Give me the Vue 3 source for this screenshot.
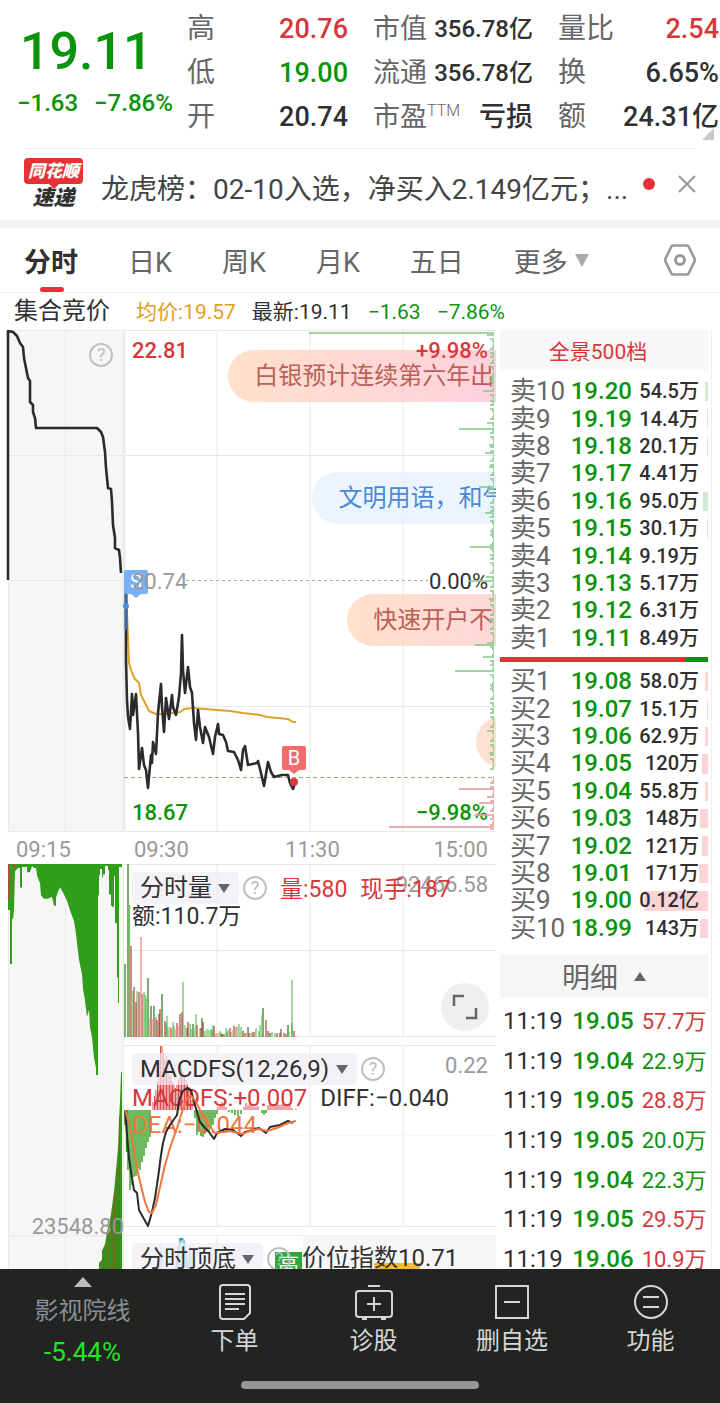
<template>
  <div class="app">
    <header class="quote">
      <div class="price-box">
        <div class="price">19.11</div>
        <div class="change"><span>−1.63</span><span>−7.86%</span></div>
      </div>
      <dl v-for="(grupo, i) in stats" :key="i" class="stats">
        <div v-for="item in grupo" :key="item.label" class="stat">
          <dt>{{ item.label }}<sup v-if="item.sup">{{ item.sup }}</sup></dt>
          <dd :class="[item.color, { small: item.small }]">{{ item.value }}</dd>
        </div>
      </dl>
      <span class="corner"></span>
    </header>

    <section class="news">
      <div class="news-logo">
        <span class="logo-top">同花顺</span>
        <span class="logo-bottom">速递</span>
      </div>
      <a href="#" class="news-text">龙虎榜：02-10入选，净买入2.149亿元；...</a>
      <span class="news-dot"></span>
      <button type="button" class="news-close" aria-label="关闭">
        <svg width="18" height="18" viewBox="0 0 18 18"><path d="M1 1L17 17M17 1L1 17" stroke="#999" stroke-width="2" /></svg>
      </button>
    </section>

    <nav class="tabs">
      <button
        v-for="tab in tabs"
        :key="tab"
        type="button"
        class="tab"
        :class="{ active: tab === activeTab }"
        @click="activeTab = tab"
      >{{ tab }}<i v-if="tab === '更多'" class="caret"></i></button>
      <button type="button" class="settings" aria-label="设置">
        <svg width="32" height="34" viewBox="0 0 32 34" fill="none" stroke="#999">
          <path d="M9 2.5H23Q24 2.5 24.600 3.500L30.500 15.500Q31 17 30.500 18.500L24.600 30.500Q24 31.500 23 31.500H9Q8 31.500 7.400 30.500L1.500 18.500Q1 17 1.500 15.500L7.400 3.500Q8 2.500 9 2.500Z" stroke-width="2.600" />
          <circle cx="16" cy="17" r="4.500" stroke-width="3" />
        </svg>
      </button>
    </nav>

    <div class="summary">
      <span class="summary-title">集合竞价</span>
      <span class="orange">均价:19.57</span>
      <span>最新:19.11</span>
      <span class="green">−1.63</span>
      <span class="green">−7.86%</span>
    </div>

    <main class="content">
      <section class="charts">
        <div class="chart">
          <svg class="plot" viewBox="0 0 496 502" preserveAspectRatio="none">
            <rect x="8" y="0" width="116" height="502" fill="#f6f6f6" />
            <path d="M8 .5H496M8 125.500H496M8 250.500H124M124 376.500H496M8 501.500H496M8.500 0V502M65.500 0V502M217 0V502M310 0V502M403 0V502" class="grid" />
            <path d="M124 0V502" stroke="#ebebeb" stroke-width="3" />
            <path d="M186 250.500H428" stroke="#aaa" stroke-dasharray="3 3" />
            <path d="M124 447.500H495" stroke="#a89c70" stroke-dasharray="4 3" />
            <polyline points="8,250 8,1 13,2 17,6 20,13 23,17 24,28 26,38 28,48 30,51 30,72 33,75 33,82 35,88 36,98 97,98 101,102 103,107 105,122 106,138 108,158 111,159 112,172 113,195 115,208 115,218 119,220 120,228 121,243" class="line thick" />
            <polyline points="126,260 128,307 129,333 132,343 135,349 139,353 141,365 145,373 149,381 156,384 165,384 173,383 180,382 184,379 193,378 217,380 230,381 243,383 260,385 267,387 288,389 293,392 296,392" class="line avg" />
            <polyline points="126,251 126,330 127,370 128,387 130,399 132,364 133,385 136,364 138,403 139,439 142,418 144,435 146,440 148,458 151,425 152,433 153,412 156,424 158,383 161,354 162,377 164,402 166,368 169,389 172,365 173,377 176,385 179,367 181,343 182,305 183,340 185,363 188,337 190,357 192,363 194,393 196,410 198,380 200,397 203,413 205,397 209,407 213,424 215,407 218,394 219,404 223,405 226,412 228,421 234,422 238,430 241,440 243,420 245,416 248,435 257,433 258,431 261,443 264,456 267,438 268,432 271,442 274,447 282,445 288,445 290,453 293,459 295,453" class="line thick" />
            <path d="M126 251V300" stroke="#3a6aa5" stroke-width="3" />
            <circle cx="126" cy="276" r="3" fill="#4a90e2" />
            <rect x="124" y="240" width="24" height="24" rx="2" fill="#7ab0f5" />
            <path d="M131 264H141L136 268Z" fill="#7ab0f5" />
            <text x="136" y="259" class="marker">S</text>
            <circle cx="294" cy="452" r="4" fill="#d9363a" />
            <rect x="282" y="416" width="24" height="24" rx="2" fill="#f26b6d" />
            <path d="M289 440H299L294 444Z" fill="#f26b6d" />
            <text x="294" y="435" class="marker">B</text>
          </svg>
          <div class="pills">
            <span class="pill pill-1">白银预计连续第六年出</span>
            <span class="pill pill-2">文明用语，和气</span>
            <span class="pill pill-3">快速开户不</span>
            <span class="pill pill-4"></span>
          </div>
          <div class="labels">
            <span class="red">22.81</span><span class="red right">+9.98%</span>
            <span class="gray">20.74</span><span class="right">0.00%</span>
            <span class="green">18.67</span><span class="green right">−9.98%</span>
          </div>
          <svg class="plot" viewBox="0 0 496 502" preserveAspectRatio="none">
            <path :d="profileSell" stroke="#8ac98e" stroke-width="2" stroke-opacity=".8" />
            <path :d="profileBuy" stroke="#e59a9d" stroke-width="2" stroke-opacity=".8" />
          </svg>
          <button type="button" class="help help-auction" aria-label="集合竞价说明">?</button>
        </div>

        <div class="time-axis">
          <span>09:15</span><span>09:30</span><span>11:30</span><span>15:00</span>
        </div>

        <div class="lower">
          <div class="auction-volume">
            <svg class="plot" viewBox="0 0 124 406" preserveAspectRatio="none">
              <rect x="8" width="116" height="406" fill="#f6f6f6" />
              <path d="M8.500 0V406M65.500 0V406M8 364.500H124" class="grid" />
              <path d="M8 0H122V3H119V136H118V111H117V58H115V12H114V42H112V41H111V30H109V6H108V2H105V10H103V13H102V5H100V11H99V31H98V207H96V200L94 190L92 170L90 160L89 143L87 150L85 134L83 122L82 108L79 94L77 78L76 68L74 56L71 48L67 36L63 28L60 23L58 27L56 33V41H54L52 32L48 34H44L41 31L40 19L37 11L36 4H34L32 2L30 8H27V3H22V23H20V4H18L15 7L14 45L13 54H12V98H10V45H8Z" fill="#309e1a" />
              <path d="M8 0H10V34H8ZM14 0H15V3H14Z" fill="#b34b36" />
              <path d="M98 406L99 405V391L102 388V379L105 373L107 361L110 349L112 336L114 321L116 301L118 278L119 251L120 234L121 204H122V406Z" fill="#39941b" />
              <path d="M103 406V385M106 406V372M109 406V358M112 406V345M114.500 406V322M117 406V298M119.500 406V248" stroke="#7a5a20" stroke-opacity=".7" />
              <path d="M123.500 0V406" stroke="#dcf5d6" />
            </svg>
            <span class="axis-value">23548.80</span>
          </div>

          <div class="indicators">
            <div class="panel panel-volume">
              <svg class="plot" viewBox="0 0 372 173" preserveAspectRatio="none">
                <path d="M0 .5H372M0 86.500H372M0 172.500H372M93 0V173M186 0V173M279 0V173" class="grid" />
                <path v-for="serie in volume" :key="serie.color" :d="serie.d" :stroke="serie.color" stroke-width="1.300" />
              </svg>
              <div class="panel-head">
                <label class="picker"><select aria-label="指标一"><option>分时量</option></select><i class="caret"></i></label>
                <button type="button" class="help" aria-label="分时量说明">?</button>
                <span class="red volume-text">量:580</span>
                <span class="red">现手:187</span>
              </div>
              <div class="panel-line">额:110.7万</div>
              <span class="scale">92466.58</span>
              <button type="button" class="expand" aria-label="全屏">
                <svg width="26" height="26" viewBox="0 0 26 26" fill="none" stroke="#666" stroke-width="2.500"><path d="M2 12V2H12M24 14V24H14" /></svg>
              </button>
            </div>

            <div class="panel panel-macd">
              <svg class="plot" viewBox="0 0 372 182" preserveAspectRatio="none">
                <path d="M0 .5H372M0 181.500H372M93 0V182M186 0V182M279 0V182" class="grid" />
                <path d="M0 90.500H372" stroke="#f6f6f6" />
                <path :d="macdUp" stroke="#d9363a" stroke-opacity=".9" />
                <path :d="macdDown" stroke="#309e1a" stroke-width="1.400" />
              </svg>
              <div class="panel-head">
                <label class="picker"><select aria-label="指标二"><option>MACDFS(12,26,9)</option></select><i class="caret"></i></label>
                <button type="button" class="help" aria-label="MACDFS说明">?</button>
              </div>
              <div class="panel-line"><span class="red">MACDFS:+0.007</span><span>DIFF:−0.040</span></div>
              <div class="panel-line dea">DEA:−0.044</div>
              <svg class="plot curves" viewBox="0 0 372 182" preserveAspectRatio="none">
                <polyline points="1,65 3,90 5,113 8,133 10,145 13,148 15,165 20,174 24,181 28,167 31,153 34,133 37,110 39,98 42,87 46,80 53,70 55,57 58,47 63,43 67,45 70,57 76,77 81,83 85,87 90,94 93,88 101,84 109,85 117,91 121,87 129,85 135,83 142,88 146,82 156,80 164,76 169,78" class="line" />
                <polyline points="1,65 6,80 11,113 16,137 21,157 25,167 28,168 32,160 36,142 41,120 46,103 53,83 58,67 63,53 67,51 71,55 76,65 83,78 91,88 99,87 106,86 118,89 129,85 135,84 143,86 153,83 164,78 172,76" class="line dea-line" />
              </svg>
              <span class="scale">0.22</span>
            </div>

            <div class="panel panel-top">
              <svg class="plot" viewBox="0 0 372 60" preserveAspectRatio="none">
                <path d="M0 .5H372M93 0V60" class="grid" />
                <rect x="179" y="1" width="193" height="59" fill="#f6f6f6" />
                <path d="M34 60L37 8L40 60ZM62 60L66 10L70 60Z" fill="#b5ddf0" />
                <path d="M51 60L56 8Q58 2 60 8L65 60Z" fill="#c8e8d8" stroke="#85c4e0" stroke-width="2" />
                <circle cx="57" cy="6" r="2" fill="#2a9fc0" />
              </svg>
              <div class="panel-head">
                <label class="picker"><select aria-label="指标三"><option>分时顶底</option></select><i class="caret"></i></label>
                <button type="button" class="help" aria-label="分时顶底说明">?</button>
                <span class="tag">高</span>
                <span class="index-text">价位指数10.71</span>
              </div>
            </div>
          </div>
        </div>
      </section>

      <aside class="book">
        <button type="button" class="depth-button">全景500档</button>
        <table class="orders sell">
          <tbody>
            <tr v-for="row in sells" :key="row[0]">
              <th scope="row">{{ row[0] }}</th>
              <td class="green">{{ row[1] }}</td>
              <td class="amount"><i :style="{ width: row[3] + '%' }"></i><span>{{ row[2] }}</span></td>
            </tr>
          </tbody>
        </table>
        <div class="ratio"><i></i></div>
        <table class="orders buy">
          <tbody>
            <tr v-for="row in buys" :key="row[0]">
              <th scope="row">{{ row[0] }}</th>
              <td class="green">{{ row[1] }}</td>
              <td class="amount"><i :style="{ width: row[3] + '%' }"></i><span>{{ row[2] }}</span></td>
            </tr>
          </tbody>
        </table>
        <button type="button" class="detail-button">明细<i class="caret up"></i></button>
        <table class="deals">
          <tbody>
            <tr v-for="(deal, i) in deals" :key="i">
              <td>11:19</td>
              <td class="green">{{ deal[0] }}</td>
              <td class="deal-amount" :class="deal[2]">{{ deal[1] }}</td>
            </tr>
          </tbody>
        </table>
      </aside>
    </main>

    <footer class="bottom">
      <div class="actions">
        <a href="#" class="sector">
          <i class="caret up"></i>
          <span>影视院线</span>
          <b>-5.44%</b>
        </a>
        <button v-for="action in actions" :key="action.name" type="button" class="action">
          <svg width="40" height="38" viewBox="0 0 40 38" fill="none" stroke="#d6d6d6" stroke-width="2">
            <path :d="action.icon" />
          </svg>
          <span>{{ action.name }}</span>
        </button>
      </div>
      <div class="home-bar"></div>
    </footer>
  </div>
</template>

<script setup>
import { ref } from 'vue';

const stats = [
  [
    { label: '高', value: '20.76', color: 'red' },
    { label: '低', value: '19.00', color: 'green' },
    { label: '开', value: '20.74' }
  ],
  [
    { label: '市值', value: '356.78亿', small: true },
    { label: '流通', value: '356.78亿', small: true },
    { label: '市盈', sup: 'TTM', value: '亏损' }
  ],
  [
    { label: '量比', value: '2.54', color: 'red' },
    { label: '换', value: '6.65%' },
    { label: '额', value: '24.31亿' }
  ]
];

const tabs = ['分时', '日K', '周K', '月K', '五日', '更多'];
const activeTab = ref('分时');

// nome, preço, volume, largura da barra (%)
const sells = [
  ['卖10', '19.20', '54.5万', 4],
  ['卖9', '19.19', '14.4万', 1],
  ['卖8', '19.18', '20.1万', 1],
  ['卖7', '19.17', '4.41万', 0],
  ['卖6', '19.16', '95.0万', 7],
  ['卖5', '19.15', '30.1万', 2],
  ['卖4', '19.14', '9.19万', 0],
  ['卖3', '19.13', '5.17万', 0],
  ['卖2', '19.12', '6.31万', 0],
  ['卖1', '19.11', '8.49万', 0]
];

const buys = [
  ['买1', '19.08', '58.0万', 4],
  ['买2', '19.07', '15.1万', 1],
  ['买3', '19.06', '62.9万', 4],
  ['买4', '19.05', '120万', 8],
  ['买5', '19.04', '55.8万', 4],
  ['买6', '19.03', '148万', 11],
  ['买7', '19.02', '121万', 8],
  ['买8', '19.01', '171万', 12],
  ['买9', '19.00', '0.12亿', 86],
  ['买10', '18.99', '143万', 11]
];

const deals = [
  ['19.05', '57.7万', 'red'],
  ['19.04', '22.9万', 'green'],
  ['19.05', '28.8万', 'red'],
  ['19.05', '20.0万', 'green'],
  ['19.04', '22.3万', 'green'],
  ['19.05', '29.5万', 'red'],
  ['19.06', '10.9万', 'red']
];

const actions = [
  { name: '下单', icon: 'M8 2H32Q35 2 35 5V30L29 36H8Q5 36 5 33V5Q5 2 8 2ZM10 11H30M10 16H30M10 21H30M10 26H24' },
  { name: '诊股', icon: 'M5 8H35Q38 8 38 11V31Q38 34 35 34H5Q2 34 2 31V11Q2 8 5 8ZM14 3H26M20 14V28M13 21H27M8 36H13M27 36H32' },
  { name: '删自选', icon: 'M4 3H36V35H4ZM12 19H28' },
  { name: '功能', icon: 'M20 3A16 16 0 0 1 20 35A16 16 0 0 1 20 3ZM12 14H28M12 24H28' }
];

const bars = (list, base) => list.map(([x, h]) => `M${x} ${base}V${base - h}`).join('');

const volume = [
  {
    color: '#3d7d2b',
    d: bars([[1, 73], [4, 173], [24, 59], [27, 31], [30, 31], [38, 43], [69, 13], [78, 19], [88, 7], [97, 4], [103, 5], [124, 10], [139, 29], [164, 12], [168, 14], [146, 4], [156, 4]], 173)
  },
  {
    color: '#6fc565',
    d: bars([[5.5, 132], [9, 46], [13, 46], [20, 45], [21.5, 42], [23, 39], [32, 20], [43, 21], [42, 14], [44, 10], [49, 15], [50, 11], [59, 55], [61, 12], [66, 13], [67, 8], [70, 10], [72, 23], [76, 9], [79, 13], [81, 6], [83, 8], [85, 7], [87, 8], [89, 12], [96, 6], [99, 3], [102, 9], [104, 7], [107, 5], [112, 10], [115, 13], [117, 10], [127, 4], [130, 5], [132, 9], [135, 6], [136, 12], [138, 22], [148, 5], [151, 4], [165, 5], [168, 57]], 173)
  },
  {
    color: '#b5504a',
    d: bars([[7, 91], [10, 50], [12, 35], [15, 45], [18, 43], [33, 17], [35, 23], [36, 28], [41, 16], [47, 9], [53, 14], [56, 23], [58, 25], [63, 9], [64, 15], [73, 12], [77, 9], [79, 15], [90, 11], [98, 3], [100, 3], [106, 9], [110, 11], [119, 6], [121, 4], [125, 4], [129, 5], [142, 17], [144, 6], [153, 4], [157, 8], [160, 4], [162, 3], [170, 6]], 173)
  },
  {
    color: '#f08a8c',
    d: bars([[17, 100], [26, 19], [29, 18], [31.5, 18], [46, 10], [52, 8], [54, 11], [92, 4], [94, 4], [109, 7], [113, 10], [123, 4], [131, 5], [172, 1]], 173)
  }
];

const macdUp = bars([
  [29, 8], [30.5, 14], [32, 20], [33.5, 28], [35, 36], [36.5, 64], [38, 64], [39.5, 57], [41, 50], [42.5, 54], [44, 42],
  [45.5, 34], [47, 36], [48.5, 28], [50, 26], [51.5, 22], [53, 25], [54.5, 30], [56, 40], [57.5, 42], [59, 38], [60.5, 34],
  [62, 30], [63.5, 26], [65, 23], [66.5, 19], [68, 10], [94, 3], [96, 5], [98, 8], [100, 6], [102, 3], [120, 3], [122, 7],
  [124, 5], [126, 6], [128, 4], [130, 3], [132, 3], [134, 4], [144, 5], [146, 6], [148, 5], [150, 6], [152, 5], [154, 6],
  [156, 5], [158, 6], [160, 7], [162, 6], [164, 6], [166, 5], [168, 2], [172, 1]
], 65);

const macdDown = bars([
  [1, -15], [2.5, -42], [4, -60], [6, -80], [8, -75], [10, -67], [12, -66], [14, -58], [16, -60], [18, -52], [20, -46],
  [22, -38], [24, -32], [26, -27], [71, -8], [73, -25], [75, -22], [77, -26], [79, -27], [81, -24], [83, -20], [85, -21],
  [87, -18], [89, -15], [91, -8], [93, -4], [105, -2], [108, -3], [111, -5], [114, -6], [117, -4], [138, -3], [140, -5], [142, -3]
], 65);

// distribuição por preço na borda direita do gráfico
const sellPeaks = { 3: 185, 61: 11, 99: 35, 123: 9, 157: 15, 183: 9, 217: 24, 247: 8, 251: 26, 315: 19, 327: 11, 341: 39 };
const buyPeaks = { 459: 35, 473: 15, 485: 20, 497: 105 };

const profile = (from, to, peaks) => {
  let d = '';
  for (let y = from; y <= to; y += 2) {
    const w = peaks[y] || ((y * y) % 7) % 5 + (y % 22 === 5 ? 3 : 0);
    d += `M494 ${y}H${494 - w}`;
  }
  return d;
};

const profileSell = profile(3, 441, sellPeaks);
const profileBuy = profile(447, 499, buyPeaks);
</script>

<style>
body {
  margin: 0;
  background: #fff;
}
</style>

<style scoped>
.app {
  display: flex;
  flex-direction: column;
  height: 100vh;
  overflow: hidden;
  color: #303030;
  font-family: Roboto, "Noto Sans CJK SC", sans-serif;
}
* {
  box-sizing: border-box;
}
button, select {
  padding: 0;
  border: none;
  background: none;
  color: inherit;
  font-family: inherit;
  cursor: pointer;
}
a {
  color: inherit;
  text-decoration: none;
}
.red {
  color: #d6383a;
}
.green {
  color: #0b930b;
}
.orange {
  color: #e0a020;
}
.gray {
  color: #999;
}
.right {
  text-align: right;
}
.caret {
  display: inline-block;
  border: 7px solid transparent;
  border-top: 10px solid #666;
  border-bottom: none;
}
.caret.up {
  border-top: none;
  border-bottom: 10px solid #666;
}

/* Cotação */
.quote {
  position: relative;
  display: grid;
  grid-template-columns: 187fr 186fr 185fr 162fr;
  padding: 7px 0 9px;
  flex: none;
}
.price-box {
  padding: 11px 0 0 17px;
  color: #0b930b;
  font-weight: 500;
}
.price {
  padding-left: 3px;
  font-size: 52px;
  line-height: 68px;
}
.change {
  display: flex;
  gap: 16px;
  font-size: 24px;
  line-height: 34px;
}
.stats {
  margin: 0;
  padding-right: 25px;
}
.stats:nth-of-type(3) {
  padding-right: 1px;
}
.stat {
  display: flex;
  justify-content: space-between;
  align-items: center;
  height: 44px;
  white-space: nowrap;
  font-size: 27px;
  line-height: 44px;
}
.stat dt {
  color: #666;
}
.stat dd {
  margin: 0;
  font-weight: 500;
}
.stat dd.small {
  font-size: 24px;
}
.stats:nth-of-type(3) dt, .stats:nth-of-type(1) dt {
  font-size: 28px;
}
.stat sup {
  font-size: 16px;
  font-weight: 300;
  line-height: 16px;
}
.corner {
  position: absolute;
  right: 6px;
  bottom: 8px;
  border: 6px solid transparent;
  border-right-color: #c8c8c8;
  border-bottom-color: #c8c8c8;
}

/* Notícia */
.news {
  display: flex;
  align-items: center;
  flex: none;
  height: 80px;
  padding: 0 24px;
  border-bottom: 8px solid #f5f5f5;
  background: linear-gradient(#f0f0f0, #f0f0f0) center top / calc(100% - 48px) 1px no-repeat;
}
.news-logo {
  display: flex;
  flex-direction: column;
  gap: 2px;
  width: 59px;
  margin-right: 18px;
  font-style: italic;
  font-weight: 900;
  text-align: center;
}
.logo-top {
  position: relative;
  padding: 0 2px;
  border-radius: 4px;
  background: #e63234;
  color: #fff;
  font-size: 17px;
  line-height: 26px;
}
.logo-top::after {
  content: "";
  position: absolute;
  left: 50%;
  top: 100%;
  margin-left: -5px;
  border: 5px solid transparent;
  border-top-color: #e63234;
}
.logo-bottom {
  font-size: 21px;
  line-height: 24px;
}
.news-text {
  flex: 1;
  overflow: hidden;
  white-space: nowrap;
  font-size: 28px;
  line-height: 40px;
  padding-top: 8px;
  color: #444;
}
.news-dot {
  width: 12px;
  height: 12px;
  margin: 0 23px 0 10px;
  border-radius: 50%;
  background: #e63234;
}
.news-close {
  height: 18px;
}
.news-close svg {
  display: block;
}
.news-text {
  padding-top: 12px;
}

/* Abas */
.tabs {
  display: flex;
  align-items: center;
  flex: none;
  gap: 50px;
  height: 65px;
  padding: 0 24px;
  border-bottom: 1px solid #eee;
}
.tab {
  position: relative;
  display: flex;
  align-items: center;
  height: 64px;
  white-space: nowrap;
  font-size: 27px;
  color: #666;
}
.tab .caret {
  margin-left: 7px;
  border-top: 13px solid #aaa;
}
.tab.active {
  color: #303030;
  font-weight: 700;
}
.tab.active::after {
  content: "";
  position: absolute;
  left: 16px;
  right: 14px;
  bottom: 0;
  height: 5px;
  border-radius: 3px;
  background: #e63234;
}
.settings {
  margin-left: auto;
  height: 34px;
}
.settings svg {
  display: block;
}

.summary {
  display: flex;
  align-items: baseline;
  flex: none;
  gap: 16px;
  height: 37px;
  padding: 0 14px;
  font-size: 21px;
  line-height: 37px;
  white-space: nowrap;
}
.summary-title {
  margin-right: 10px;
  font-size: 24px;
}

/* Gráficos */
.content {
  display: grid;
  grid-template-columns: 31fr 14fr;
  flex: 1;
  min-height: 0;
  overflow: hidden;
}
.charts {
  min-width: 0;
}
.chart {
  position: relative;
  height: 502px;
  overflow: hidden;
}
.plot {
  position: absolute;
  inset: 0;
  width: 100%;
  height: 100%;
  fill: none;
}
.grid {
  stroke: #e8e8e8;
}
.line {
  fill: none;
  stroke: #2b2b2b;
  stroke-width: 2;
  stroke-linejoin: round;
}
.thick {
  stroke-width: 2.6;
}
.avg {
  stroke: #dba32c;
}
.dea-line {
  stroke: #ee7740;
}
.marker {
  fill: #fff;
  font-size: 20px;
  text-anchor: middle;
}
.labels {
  position: absolute;
  inset: 8px 8px 6px 132px;
  display: grid;
  grid-template-columns: 1fr 1fr;
  align-content: space-between;
  font-size: 22px;
  line-height: 26px;
}
.labels .red, .labels .green {
  font-weight: 500;
}
.pills {
  position: absolute;
  inset: 20px 0 auto 0;
  display: flex;
  flex-direction: column;
  gap: 70px;
}
.pill {
  flex: none;
  height: 52px;
  padding-left: 26px;
  border-radius: 26px 0 0 26px;
  overflow: hidden;
  white-space: nowrap;
  font-size: 24px;
  line-height: 52px;
  color: #bb5f59;
  background: rgba(255, 213, 190, 0.7);
}
.pill-1 {
  margin-left: 46%;
  background: linear-gradient(90deg, rgba(255, 217, 190, 0.8), rgba(255, 190, 208, 0.7));
}
.pill-2 {
  margin-left: 63%;
  color: #4a88d8;
  background: rgba(230, 242, 255, 0.75);
}
.pill-3 {
  margin-left: 70%;
  background: linear-gradient(90deg, rgba(255, 217, 190, 0.8), rgba(255, 200, 200, 0.7));
}
.pill-4 {
  margin-left: 96%;
}
.help {
  width: 24px;
  height: 24px;
  flex: none;
  border: 2px solid #c0c0c0;
  border-radius: 50%;
  font-size: 18px;
  line-height: 20px;
  color: #bbb;
  text-align: center;
}
.help-auction {
  position: absolute;
  left: 18%;
  top: 13px;
}
.time-axis {
  display: grid;
  grid-template-columns: 25fr 32fr 25fr 18fr;
  height: 32px;
  padding: 0 8px 0 16px;
  font-size: 22px;
  line-height: 35px;
  color: #999;
}
.time-axis span:last-child {
  text-align: right;
}
.lower {
  display: grid;
  grid-template-columns: 1fr 3fr;
}
.auction-volume {
  position: relative;
}
.axis-value {
  position: absolute;
  right: 0;
  top: 349px;
  font-size: 22px;
  line-height: 28px;
  color: #999;
}
.panel {
  position: relative;
  padding: 8px 0 0 8px;
  font-size: 23px;
}
.panel-volume {
  height: 173px;
}
.panel-macd {
  height: 182px;
  margin: 8px 0;
  font-size: 24px;
}
.panel-top {
  height: 43px;
}
.panel-head {
  position: relative;
  display: flex;
  align-items: center;
  height: 32px;
  white-space: nowrap;
}
.panel-head > span {
  padding-bottom: 3px;
}
.picker {
  display: flex;
  align-items: center;
  height: 32px;
  margin-right: 4px;
  padding: 0 9px 0 8px;
  border-radius: 4px;
  background: rgba(240, 236, 242, 0.7);
}
.picker select {
  appearance: none;
  margin-right: 6px;
  font-size: 24px;
  line-height: 32px;
}
.picker .caret {
  border-width: 9px 6px 0;
}
.volume-text {
  margin: 0 13px;
}
.panel-line {
  position: relative;
  display: flex;
  gap: 13px;
  height: 27px;
  line-height: 26px;
  white-space: nowrap;
}
.dea {
  color: #ee7740;
}
.scale {
  position: absolute;
  right: 8px;
  top: 8px;
  font-size: 22px;
  line-height: 26px;
  color: #999;
}
.panel-volume .panel-head {
  z-index: 1;
}
.curves {
  pointer-events: none;
}
.expand {
  position: absolute;
  right: 7px;
  bottom: 6px;
  display: grid;
  place-items: center;
  width: 48px;
  height: 48px;
  border-radius: 50%;
  background: #efefef;
}
.panel-top .help {
  position: relative;
  z-index: 1;
}
.panel-head .tag {
  align-self: flex-start;
  margin: 9px 0 0 -16px;
  padding: 0 3px;
  background: #30a836;
  color: #fff;
  font-size: 21px;
  line-height: 26px;
}
.index-text {
  font-size: 24px;
  line-height: 32px;
  background: linear-gradient(#f9b738, #f9b738) 72px 21px / 46px 20px no-repeat;
}

/* Livro de ofertas */
.book {
  min-width: 0;
  margin-right: 8px;
  padding: 0 3px 0 4px;
  border-right: 1px solid #eee;
}
.depth-button {
  display: block;
  width: 100%;
  height: 40px;
  margin-bottom: 8px;
  padding-right: 12px;
  background: #f7f7f7;
  color: #d6383a;
  font-size: 21px;
}
.orders, .deals {
  width: 100%;
  border-collapse: collapse;
  table-layout: fixed;
  white-space: nowrap;
}
.orders {
  height: 274px;
}
.orders th, .orders td, .deals td {
  padding: 0;
  line-height: 27px;
}
.orders th {
  width: 34%;
  padding-left: 10px;
  text-align: left;
  font-size: 26px;
  font-weight: 400;
  color: #666;
}
.orders td {
  font-size: 24px;
  font-weight: 500;
}
.orders .amount {
  width: 36%;
  padding-right: 9px;
  position: relative;
  text-align: right;
  font-size: 20px;
}
.amount span {
  position: relative;
}
.amount i {
  position: absolute;
  right: 0;
  top: 4px;
  bottom: 4px;
}
.sell i {
  background: #cfebd2;
}
.buy i {
  background: #fcd4d6;
}
.ratio {
  height: 5px;
  margin: 5px 0 6px;
  background: #0b930b;
}
.ratio i {
  display: block;
  width: 89%;
  height: 5px;
  background: #e63234;
}
.detail-button {
  display: flex;
  align-items: center;
  justify-content: center;
  gap: 16px;
  width: 100%;
  height: 44px;
  margin: 12px 0 4px;
  background: #f6f6f6;
  color: #666;
  font-size: 28px;
}
.detail-button .caret {
  border-width: 0 6px 9px;
}
.deals {
  height: 277px;
}
.deals td {
  font-size: 24px;
  padding-left: 3px;
}
.deals td.green:nth-child(2) {
  font-weight: 500;
}
.deals .deal-amount {
  padding-right: 2px;
  text-align: right;
  font-size: 22px;
}

/* Rodapé */
.bottom {
  flex: none;
  padding-bottom: 14px;
  background: #222422;
  color: #d6d6d6;
}
.actions {
  display: grid;
  grid-template-columns: 165fr 139fr 139fr 138fr 139fr;
  height: 112px;
}
.sector, .action {
  display: flex;
  flex-direction: column;
  align-items: center;
  font-size: 24px;
}
.sector {
  padding-top: 8px;
  color: #8b8e96;
  line-height: 41px;
}
.sector .caret {
  border-width: 0 9px 10px;
  border-bottom-color: #bbb;
}
.sector span {
  margin-top: 4px;
}
.sector b {
  color: #22e622;
  font-size: 26px;
  font-weight: 400;
}
.action {
  padding-top: 14px;
}
.action span {
  line-height: 41px;
}
.home-bar {
  width: 33%;
  height: 8px;
  margin: 0 auto;
  border-radius: 4px;
  background: #979397;
}
</style>
